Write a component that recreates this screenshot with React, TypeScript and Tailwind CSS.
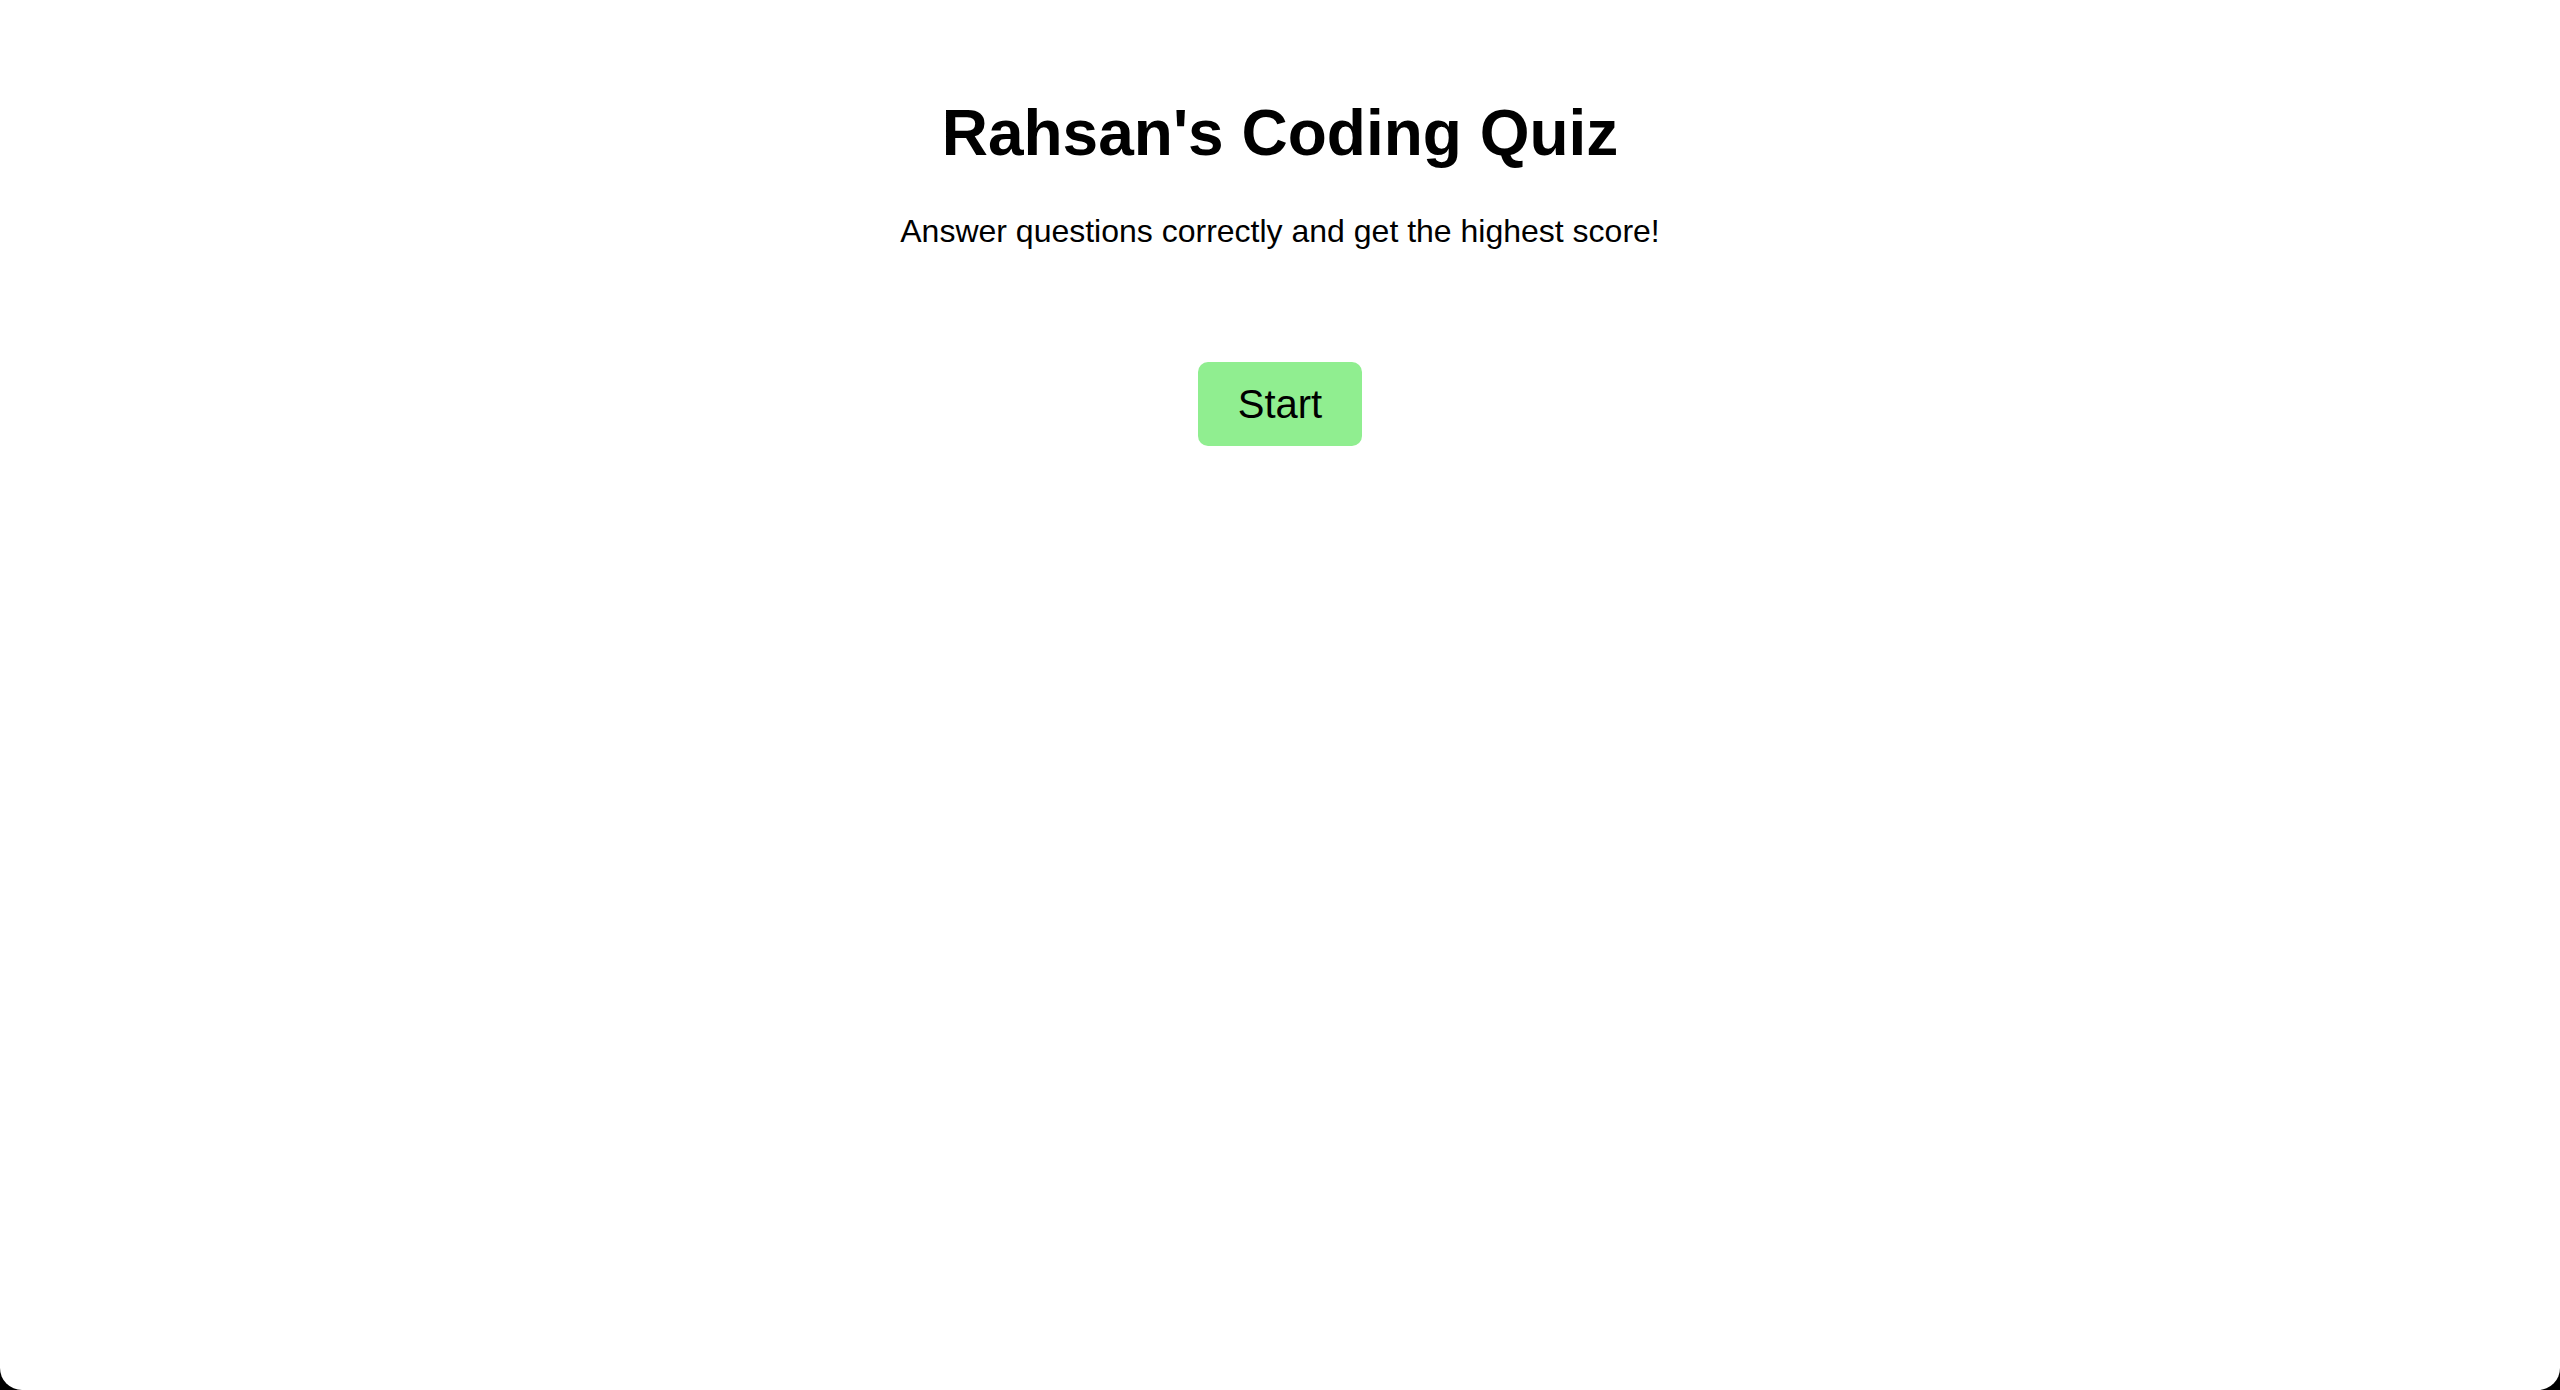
export default function App() {
  return (
    <div className="h-screen w-full bg-black">
      <div className="h-full w-full bg-white rounded-b-[22px] flex flex-col items-center pt-[96px] font-['Liberation_Sans',Arial,sans-serif] text-black">
        <h1 className="m-0 text-[64px] leading-[74px] font-bold">Rahsan's Coding Quiz</h1>
        <p className="mt-[43px] text-[32px] leading-[37px]">
          Answer questions correctly and get the highest score!
        </p>
        <button className="mt-[112px] px-[40px] py-[19px] rounded-[10px] bg-[#90ee90] text-[40px] leading-[46px] cursor-pointer">
          Start
        </button>
      </div>
    </div>
  );
}
